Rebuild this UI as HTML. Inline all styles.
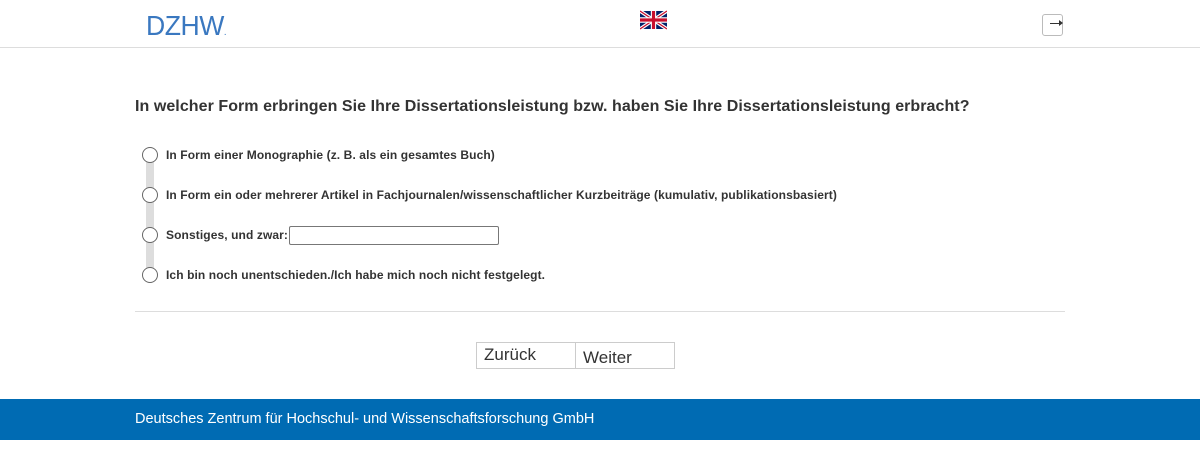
<!DOCTYPE html>
<html><head><meta charset="utf-8"><style>
body{margin:0;width:1200px;height:449px;background:#fff;font-family:"Liberation Sans",sans-serif;position:relative;overflow:hidden;color:#333}
.hdr{position:absolute;left:0;top:0;width:1200px;height:47px;border-bottom:1px solid #ddd}
.logo{position:absolute;left:146px;top:10px;font-family:"Liberation Sans",sans-serif;font-size:28px;color:#3a78c0;letter-spacing:-0.5px;transform:scaleX(0.95);transform-origin:left}
.q{position:absolute;left:135px;top:98px;font-size:16px;font-weight:bold;color:#333;white-space:nowrap;letter-spacing:0.06px}
.bar{position:absolute;left:146px;top:160px;width:8px;height:112px;background:#ddd}
.r{position:absolute;left:142px;width:14px;height:14px;border:1px solid #666;border-radius:50%;background:#fff}
.l{position:absolute;left:166px;font-size:12px;font-weight:bold;color:#333;white-space:nowrap;letter-spacing:0.1px}
.hr{position:absolute;left:135px;top:311px;width:930px;border-top:1px solid #ddd}
.btn{position:absolute;top:342px;height:27px;border:1px solid #ccc;font-family:"Liberation Sans",sans-serif;font-size:17px;color:#333;box-sizing:border-box;padding-left:7px}
.ft{position:absolute;left:0;top:399px;width:1200px;height:41px;background:#006bb3;color:#fff;font-size:14.5px;line-height:41px}
</style></head><body>
<div class="hdr">
<div class="logo">DZHW<span style="font-size:10px">.</span></div>
<svg style="position:absolute;left:640px;top:10px" width="27" height="20" viewBox="0 0 60 40"><rect width="60" height="40" fill="#012169"/><path d="M0,0L60,40M60,0L0,40" stroke="#fff" stroke-width="8"/><path d="M0,0L60,40M60,0L0,40" stroke="#c8102e" stroke-width="3"/><path d="M30,0V40M0,20H60" stroke="#fff" stroke-width="12"/><path d="M30,0V40M0,20H60" stroke="#c8102e" stroke-width="7"/></svg>
<div style="position:absolute;left:1042px;top:14px;width:19px;height:20px;border:1px solid #bbb;border-radius:3px"></div>
<div style="position:absolute;left:1050px;top:23px;width:10px;height:1px;background:#333"></div>
<div style="position:absolute;left:1059px;top:20px;border-left:4px solid #333;border-top:3.5px solid transparent;border-bottom:3.5px solid transparent"></div>
</div>
<div class="q">In welcher Form erbringen Sie Ihre Dissertationsleistung bzw. haben Sie Ihre Dissertationsleistung erbracht?</div>
<div class="bar"></div>
<div class="r" style="top:147px"></div><div class="l" style="top:148px">In Form einer Monographie (z. B. als ein gesamtes Buch)</div>
<div class="r" style="top:187px"></div><div class="l" style="top:188px">In Form ein oder mehrerer Artikel in Fachjournalen/wissenschaftlicher Kurzbeiträge (kumulativ, publikationsbasiert)</div>
<div class="r" style="top:227px"></div><div class="l" style="top:228px">Sonstiges, und zwar:</div>
<div style="position:absolute;left:289px;top:226px;width:208px;height:17px;border:1px solid #777;border-radius:2px"></div>
<div class="r" style="top:267px"></div><div class="l" style="top:268px">Ich bin noch unentschieden./Ich habe mich noch nicht festgelegt.</div>
<div class="hr"></div>
<div class="btn" style="left:476px;width:100px;line-height:24px">Zurück</div>
<div class="btn" style="left:575px;width:100px;line-height:30px">Weiter</div>
<div class="ft"><span style="margin-left:135px">Deutsches Zentrum für Hochschul- und Wissenschaftsforschung GmbH</span></div>
</body></html>
